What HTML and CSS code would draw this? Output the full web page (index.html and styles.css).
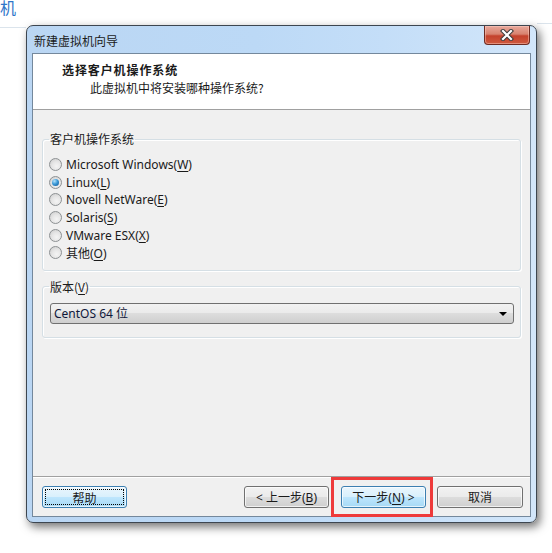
FILE: index.html
```html
<!DOCTYPE html>
<html lang="zh-CN">
<head>
    <meta charset="UTF-8">
    <title>新建虚拟机向导</title>
    <link rel="stylesheet" href="styles.css">
</head>
<body>
    <div class="desktop">
        <div class="bg-glyph">机</div>
        <div class="bg-line bg-line-left"></div>
        <div class="bg-line bg-line-right"></div>

        <div class="window">
            <div class="titlebar">
                <span class="title">新建虚拟机向导</span>
                <button class="close-btn" title="关闭">
                    <svg width="16" height="12" viewBox="0 0 16 12">
                        <path d="M4 2 L12 10 M12 2 L4 10" stroke="#3b3b3b" stroke-width="4.2" stroke-linecap="square"/>
                        <path d="M4 2 L12 10 M12 2 L4 10" stroke="#ffffff" stroke-width="2.2" stroke-linecap="square"/>
                    </svg>
                </button>
            </div>

            <div class="client">
                <div class="wizard-header">
                    <div class="wizard-title">选择客户机操作系统</div>
                    <div class="wizard-subtitle">此虚拟机中将安装哪种操作系统?</div>
                </div>

                <div class="wizard-body">
                    <fieldset class="group">
                        <legend>客户机操作系统</legend>
                        <div class="radio-list">
                            <label class="radio"><span class="radio-dot"></span><span>Microsoft Windows(<u>W</u>)</span></label>
                            <label class="radio checked"><span class="radio-dot"></span><span>Linux(<u>L</u>)</span></label>
                            <label class="radio"><span class="radio-dot"></span><span>Novell NetWare(<u>E</u>)</span></label>
                            <label class="radio"><span class="radio-dot"></span><span>Solaris(<u>S</u>)</span></label>
                            <label class="radio"><span class="radio-dot"></span><span>VMware ESX(<u>X</u>)</span></label>
                            <label class="radio"><span class="radio-dot"></span><span>其他(<u>O</u>)</span></label>
                        </div>
                    </fieldset>

                    <fieldset class="group group-version">
                        <legend>版本(<u>V</u>)</legend>
                        <div class="combo">
                            <span class="combo-text">CentOS 64 位</span>
                            <span class="combo-arrow"></span>
                        </div>
                    </fieldset>
                </div>

                <div class="wizard-footer">
                    <button class="btn btn-focus"><span class="focus-rect">帮助</span></button>
                    <div class="spacer"></div>
                    <button class="btn"><span>&lt; 上一步(<u>B</u>)</span></button>
                    <div class="highlight-wrap">
                        <button class="btn btn-hover"><span>下一步(<u>N</u>) &gt;</span></button>
                        <div class="highlight"></div>
                    </div>
                    <button class="btn btn-cancel">取消</button>
                </div>
            </div>
        </div>
    </div>
</body>
</html>
```

FILE: styles.css
```css
/* Escritorio con la ventana del asistente */
body {
    margin: 0;
    background-color: #fff;
    font-family: "Noto Sans", "Noto Sans CJK SC", sans-serif;
    font-size: 12px;
    color: #1a1a1a;
}
.desktop {
    position: relative;
    width: 552px;
    height: 553px;
    overflow: hidden;
}
.bg-glyph {
    position: absolute;
    left: 0;
    top: -3px;
    font-size: 16px;
    line-height: 20px;
    color: #2f76c9;
    font-family: "Noto Sans CJK SC", sans-serif;
}
.bg-line {
    position: absolute;
    height: 1px;
    background-color: #dbe4ec;
}
.bg-line-left {
    left: 0;
    top: 27px;
    width: 26px;
}
.bg-line-right {
    left: 537px;
    top: 23px;
    width: 15px;
}

/* Ventana */
.window {
    position: absolute;
    left: 26px;
    top: 25px;
    width: 499px;
    height: 491px;
    border: 1px solid #3d4650;
    border-radius: 7px;
    background: linear-gradient(90deg, #bad6f3 0%, #bcd9f6 45%, #c4def8 70%, #d2e6fa 100%);
    box-shadow: 3px 4px 10px rgba(0, 0, 0, 0.55);
    display: flex;
    flex-direction: column;
    padding: 0 5px 5px 5px;
}
.titlebar {
    height: 27px;
    flex: none;
    display: flex;
    align-items: center;
    position: relative;
}
.title {
    margin-left: 2px;
    margin-top: 2px;
    color: #1a1a1a;
    font-family: "Noto Sans CJK SC", sans-serif;
}
.close-btn {
    position: absolute;
    right: 1px;
    top: 0;
    width: 46px;
    height: 19px;
    border: 1px solid #6e2b22;
    border-top: none;
    border-radius: 0 0 4px 4px;
    background: linear-gradient(180deg, #e8a89b 0%, #d8826f 45%, #c4412c 55%, #cf5a3f 100%);
    box-shadow: inset 0 0 0 1px rgba(255, 210, 200, 0.45);
    padding: 0;
    display: flex;
    align-items: center;
    justify-content: center;
}

/* Área de cliente */
.client {
    flex: 1;
    display: flex;
    flex-direction: column;
    border: 1px solid #74889c;
    background-color: #f0f0f0;
}
.wizard-header {
    height: 56px;
    flex: none;
    background-color: #fff;
    border-bottom: 1px solid #a0a0a0;
    box-sizing: border-box;
    padding-top: 7px;
    font-family: "Noto Sans CJK SC", sans-serif;
}
.wizard-title {
    padding-left: 29px;
    font-weight: bold;
    line-height: 17px;
    letter-spacing: 0.9px;
}
.wizard-subtitle {
    padding-left: 57px;
    line-height: 17px;
    margin-top: 1px;
}
.wizard-body {
    flex: 1;
    padding: 21px 9px 0 9px;
}
.group {
    margin: 0;
    padding: 0 0 8px 6px;
    border: 1px solid #d5dfe5;
    border-radius: 3px;
    box-shadow: inset 1px 1px 0 #fff, 1px 1px 0 #fff;
}
.group legend {
    padding: 0 1px;
    line-height: 16px;
    font-family: "Noto Sans CJK SC", sans-serif;
}
.radio-list {
    padding-top: 9px;
    display: flex;
    flex-direction: column;
}
.radio {
    height: 17.6px;
    display: flex;
    align-items: center;
    gap: 4px;
    font-family: "Noto Sans", "Noto Sans CJK SC", sans-serif;
}
.radio u, .group legend u, .btn u {
    text-underline-offset: 2px;
}
.radio-dot {
    width: 11px;
    height: 11px;
    border-radius: 50%;
    border: 1px solid #8d9193;
    background: radial-gradient(circle at 60% 65%, #f4f4f4 0%, #e6e6e6 45%, #c9c9c9 100%);
    position: relative;
    flex: none;
}
.radio.checked .radio-dot::after {
    content: "";
    position: absolute;
    left: 2px;
    top: 2px;
    width: 7px;
    height: 7px;
    border-radius: 50%;
    background: radial-gradient(circle at 35% 30%, #b6e3fb 0%, #3c9ad8 45%, #0d4f8c 100%);
}
.group-version {
    margin-top: 8px;
    padding: 0 6px 13px 6px;
}
.combo {
    margin-top: 8px;
    margin-left: 1px;
    height: 19px;
    border: 1px solid #707070;
    border-radius: 3px;
    background: linear-gradient(180deg, #f2f2f2 0%, #ebebeb 45%, #dddddd 50%, #cfcfcf 100%);
    display: flex;
    align-items: center;
    justify-content: space-between;
    padding: 0 6px 0 3px;
}
.combo-text {
    color: #10183a;
}
.combo-arrow {
    width: 0;
    height: 0;
    border-left: 4px solid transparent;
    border-right: 4px solid transparent;
    border-top: 4px solid #000;
    margin-top: 1px;
}

/* Botones inferiores */
.wizard-footer {
    height: 40px;
    flex: none;
    border-top: 1px solid #a0a0a0;
    box-shadow: inset 0 1px 0 #fff;
    display: flex;
    align-items: flex-start;
    padding: 9px 7px 0 9px;
    box-sizing: border-box;
}
.spacer {
    flex: 1;
}
.btn {
    width: 85px;
    height: 22px;
    border: 1px solid #707070;
    border-radius: 3px;
    background: linear-gradient(180deg, #f2f2f2 0%, #ebebeb 48%, #dddddd 50%, #cfcfcf 100%);
    box-shadow: inset 0 0 0 1px rgba(255, 255, 255, 0.7);
    font-family: "Noto Sans", "Noto Sans CJK SC", sans-serif;
    font-size: 12px;
    color: #1a1a1a;
    padding: 0;
    display: flex;
    align-items: center;
    justify-content: center;
}
.btn-focus {
    border-color: #3c7fb1;
    background: linear-gradient(180deg, #eaf6fd 0%, #d9f0fc 48%, #bee6fd 50%, #a7d9f5 100%);
    padding: 2px;
}
.focus-rect {
    flex: 1;
    align-self: stretch;
    display: flex;
    align-items: center;
    justify-content: center;
    border: 1px dotted #000;
    font-family: "Noto Sans CJK SC", sans-serif;
}
.btn-hover {
    border-color: #3c7fb1;
    background: linear-gradient(180deg, #eaf6fd 0%, #d9f0fc 48%, #bee6fd 50%, #a7d9f5 100%);
}
.highlight-wrap {
    position: relative;
    margin: 0 11px 0 12px;
}
.highlight {
    position: absolute;
    left: -10px;
    right: -7px;
    top: -9px;
    bottom: -9px;
    border: 3px solid #ee3a3a;
}
.btn-cancel {
    width: 86px;
}
```
